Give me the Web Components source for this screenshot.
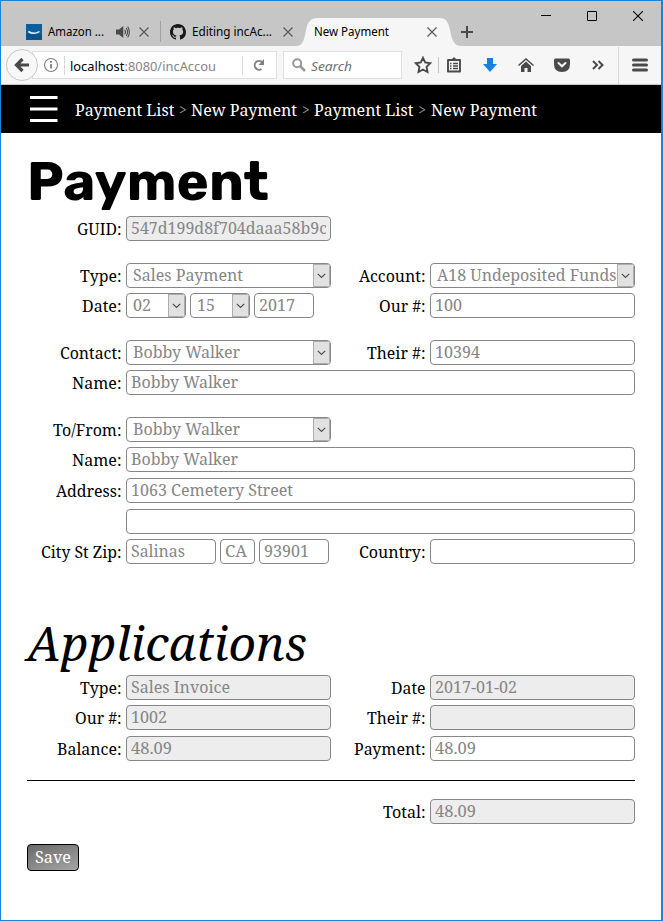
<!DOCTYPE html>
<html lang="en">
<head>
<meta charset="utf-8">
<title>New Payment</title>
<style>
html,body{margin:0;height:100%;background:#fff}
body{font:16px "Noto Serif","Droid Serif","DejaVu Serif Condensed","DejaVu Serif",serif;color:#000;overflow:hidden}
</style>
</head>
<body>
<app-window></app-window>
<script>
const define = (name, css, html, after) => customElements.define(name, class extends HTMLElement {
  connectedCallback() {
    if (this.shadowRoot) return;
    const root = this.attachShadow({mode: 'open'});
    root.innerHTML = `<style>*{box-sizing:border-box}${css}</style>` + (typeof html === 'function' ? html(this) : html);
    if (after) after(this, root);
  }
});

/* Single line of text condensed or widened to the width in "w". */
define('fit-text', `:host{display:block;flex:none;white-space:pre}span{display:inline-block;transform-origin:0 50%}`,
  '<span><slot></slot></span>', (host, root) => {
    const span = root.querySelector('span');
    const w = +host.getAttribute('w');
    if (!w) return;
    const natural = span.getBoundingClientRect().width;
    host.style.width = w + 'px';
    if (natural) span.style.transform = `scaleX(${w / natural})`;
  });

const X = '<path d="M3.5 3.5l9 9M12.5 3.5l-9 9" fill="none" stroke="#5a5a5a" stroke-width="1.2"/>';
const ICONS = {
  amazon: [16,16,'<path fill="#0b5f9e" d="M0 0h16v16H0z"/><path fill="#084a80" d="M0 10h16v6H0z" opacity=".6"/><path d="M2.3 7.5q5.700 3.700 11.200 0" fill="none" stroke="#e8f3fb" stroke-width="1.500"/>'],
  sound: [16,16,'<path fill="#4a4a4a" d="M1 5.5h3L8.300 2v12L4 10.500H1z"/><path d="M9.700 5.700q1.500 2.300 0 4.600M11.300 4q2.500 4 0 8M12.700 2.500q3.300 5.500 0 11" fill="none" stroke="#4a4a4a" stroke-width="1.100"/>'],
  close: [16,16,X],
  github: [16,16,'<path fill="#191717" fill-rule="evenodd" d="M8 0C3.580 0 0 3.580 0 8c0 3.540 2.290 6.530 5.470 7.590.4.070.550-.170.550-.380 0-.190-.010-.820-.010-1.490-2.010.370-2.530-.490-2.690-.940-.090-.230-.480-.940-.820-1.130-.280-.150-.680-.520-.010-.530.630-.010 1.080.580 1.230.820.720 1.210 1.870.870 2.330.660.070-.520.280-.870.510-1.070-1.780-.200-3.640-.890-3.640-3.950 0-.870.310-1.590.820-2.150-.080-.200-.360-1.020.080-2.120 0 0 .670-.210 2.200.820.640-.180 1.320-.270 2-.270s1.360.090 2 .270c1.530-1.040 2.200-.820 2.200-.820.440 1.100.160 1.920.080 2.120.510.560.820 1.270.820 2.150 0 3.070-1.870 3.750-3.650 3.950.290.250.540.730.540 1.480 0 1.070-.010 1.930-.010 2.200 0 .210.150.460.550.380A8.010 8.010 0 0 0 16 8c0-4.420-3.580-8-8-8z"/>'],
  plus: [12,12,'<path d="M6 0v12M0 6h12" stroke="#4a4a4a" stroke-width="2"/>'],
  min: [10,10,'<path d="M0 4.500h10" stroke="#000"/>'],
  max: [10,10,'<path d="M.5.5h9v9h-9z" fill="none" stroke="#000"/>'],
  quit: [10,10,'<path d="M0 0l10 10M10 0L0 10" stroke="#000" stroke-width="1.100"/>'],
  back: [16,16,'<path d="M15 8H3M8.500 2L2.500 8l6 6" fill="none" stroke="#4a4a4a" stroke-width="3.200"/>'],
  info: [16,16,'<circle cx="8" cy="8" r="6.500" fill="none" stroke="#808080" stroke-width="1.100"/><path d="M8 7v4.500M8 4v1.700" stroke="#707070" stroke-width="1.600"/>'],
  reload: [14,14,'<path d="M9.500 11A4.400 4.400 0 1 1 10.500 4.500" fill="none" stroke="#808080" stroke-width="1.900"/><path fill="#808080" d="M12 1v6H6.500z"/>'],
  search: [14,14,'<circle cx="5.200" cy="5.200" r="4" fill="none" stroke="#989898" stroke-width="2"/><path d="M8 8l5 5" stroke="#989898" stroke-width="2.500"/>'],
  star: [18,18,'<path d="M9 1.800l2.200 4.700 5 .7-3.600 3.600.9 5.200L9 13.500 4.500 16l.9-5.200-3.600-3.600 5-.7z" fill="none" stroke="#4a4a4a" stroke-width="1.900"/>'],
  list: [16,16,'<path d="M2 3h12v11.500H2z" fill="#f6f6f6" stroke="#4a4a4a" stroke-width="1.900" stroke-linejoin="round"/><path d="M4 4h8V2h-2L8 0 6 2H4z" fill="#4a4a4a"/><path d="M4 6.500h1.500M7 6.500h5M4 9h1.500M7 9h5M4 11.500h1.500M7 11.500h5" stroke="#4a4a4a" stroke-width="1.300"/>'],
  down: [16,16,'<path d="M5 1h6v6h4l-7 8-7-8h4z" fill="#177fe6"/>'],
  home: [18,16,'<path d="M1.500 8.500L9 2l7.500 6.500" fill="none" stroke="#4a4a4a" stroke-width="1.500"/><path d="M4 9l5-4.400L14 9v6h-3.500v-4h-3v4H4z" fill="#4a4a4a"/>'],
  pocket: [16,16,'<path d="M1.500 1.500h13q1.500 0 1.500 1.500v4q0 8-8 8t-8-8V3q0-1.500 1.500-1.500z" fill="#4a4a4a"/><path d="M4.500 6L8 9.300 11.500 6" fill="none" stroke="#f6f6f6" stroke-width="2" stroke-linecap="round"/>'],
  more: [12,12,'<path d="M1 2l4 4-4 4M6.500 2l4 4-4 4" fill="none" stroke="#4a4a4a" stroke-width="2"/>'],
  menu: [16,14,'<path d="M1.500 2h13M1.500 7h13M1.500 12h13" stroke="#4a4a4a" stroke-width="3" stroke-linecap="round"/>'],
  burger: [28,26,'<path d="M0 1.500h27.500M0 13h27.500M0 24.500h27.500" stroke="#fff" stroke-width="3"/>'],
  chevron: [9,6,'<path d="M.8.800l3.700 3.700L8.200.8" fill="none" stroke="#505050" stroke-width="1.200"/>']
};
define('ui-icon', ':host{display:block;flex:none}svg{display:block}', h => {
  const [w, ht, body] = ICONS[h.getAttribute('name')];
  return `<svg width="${w}" height="${ht}" viewBox="0 0 ${w} ${ht}">${body}</svg>`;
});

define('browser-tabs', `:host{display:flex;height:45px;background:#c6c6c6;font:12px/16px "Noto Sans","Open Sans",sans-serif}
.tab{display:flex;align-items:center;height:27px;margin-top:17px}
.a{width:159px;padding-left:25px}.a fit-text{margin-left:6px}
.sep{width:1px;height:21px;background:#a0a0a0;margin-top:20px}
.b{width:135px;padding-left:9px}.b fit-text{margin-left:6px}
.on{width:165px;height:28px;padding-left:18px}
.on{position:relative}.on svg{position:absolute;left:0;top:0}.on fit-text,.on ui-icon{position:relative}
.win{display:flex;align-items:flex-start;margin:10px 0 0 68px;gap:36px}`,
`<div class="tab a"><ui-icon name="amazon"></ui-icon><fit-text w="56">Amazon ...</fit-text><ui-icon name="sound" style="margin-left:11px"></ui-icon><ui-icon name="close" style="margin-left:5px"></ui-icon></div>
<div class="sep"></div>
<div class="tab b"><ui-icon name="github"></ui-icon><fit-text w="80">Editing incAc...</fit-text><ui-icon name="close" style="margin-left:8px"></ui-icon></div>
<div class="tab on"><svg width="165" height="28"><path fill="#f6f6f6" d="M0 28C7 28 8 22 10 12 12 3 15 0 22 0h121c7 0 9 3 11 12 2 10 4 16 11 16z"/></svg><fit-text w="75">New Payment</fit-text><ui-icon name="close" style="margin-left:35px"></ui-icon></div>
<ui-icon name="plus" style="margin-top:25px"></ui-icon>
<div class="win"><ui-icon name="min"></ui-icon><ui-icon name="max"></ui-icon><ui-icon name="quit"></ui-icon></div>`);

define('browser-toolbar', `:host{display:flex;height:39px;background:#f6f6f6;border-bottom:1px solid #c4c8c8;align-items:center;padding-left:5px;font:13px/18px "Noto Sans","Open Sans",sans-serif}
.back{width:32px;height:32px;border:1px solid #c8c8c8;border-radius:50%;background:#f8f8f8;display:grid;place-items:center;flex:none;z-index:1}
.url{margin-left:-6px;width:245px;height:28px;background:#fff;border:1px solid #e0e0e0;display:flex;align-items:center;padding-left:10px;flex:none}
.s{width:1px;height:19px;background:#d8d8d8;flex:none}
.url fit-text,.search fit-text{padding-top:1px}
.url fit-text{color:#858585}.url b{font-weight:400;color:#000}
.search{margin-left:6px;width:119px;height:28px;background:#fff;border:1px solid #e0e0e0;display:flex;align-items:center;padding-left:8px;gap:5px;color:#707070;font-style:italic;flex:none}
.tools{display:flex;align-items:center;margin-left:12px}
.tools>span{width:36px;display:grid;place-items:center}`,
`<div class="back"><ui-icon name="back"></ui-icon></div>
<div class="url"><ui-icon name="info"></ui-icon><i class="s" style="margin:0 5px"></i><fit-text w="146"><b>localhost</b>:8080/incAccou</fit-text><i class="s" style="margin:0 9px 0 26px"></i><ui-icon name="reload"></ui-icon></div>
<div class="search"><ui-icon name="search"></ui-icon><fit-text w="41">Search</fit-text></div>
<div class="tools"><ui-icon name="star"></ui-icon><i class="s" style="margin:0 -3px 0 6px;height:16px;background:#c4c4c4"></i><span><ui-icon name="list"></ui-icon></span><span><ui-icon name="down"></ui-icon></span><span><ui-icon name="home"></ui-icon></span><span><ui-icon name="pocket"></ui-icon></span><span><ui-icon name="more"></ui-icon></span><i class="s" style="height:37px;margin:0 13px 0 2px"></i><ui-icon name="menu"></ui-icon></div>`);

define('crumb-bar', `:host{display:flex;height:48px;background:#000;color:#fff;align-items:center;padding-left:29px;line-height:24px}
fit-text,i{padding-top:2px}
ui-icon{margin-right:17px}i{font-style:normal;color:#999;width:17px;text-align:center;font-size:14px;flex:none}`,
`<ui-icon name="burger"></ui-icon><fit-text w="99.300">Payment List</fit-text><i>&gt;</i><fit-text w="106">New Payment</fit-text><i>&gt;</i><fit-text w="99.300">Payment List</fit-text><i>&gt;</i><fit-text w="106">New Payment</fit-text>`);

define('form-row', `:host{display:grid;grid-template-columns:95px 205px 91px 205px;column-gap:4px;height:25px}
::slotted([wide]){grid-column:2 / span 3}::slotted([right]){grid-column-start:3}`, '<slot></slot>');
define('form-label', ':host{display:flex;justify-content:flex-end;line-height:25px;padding:1px 1px 0 0}',
  h => `<fit-text w="${h.getAttribute('w') - 0.5}">${h.getAttribute('text')}</fit-text>`);
define('field-group', ':host{display:flex;gap:4px}', '<slot></slot>');
define('text-field', `:host{display:block;height:25px;border:1px solid #868686;border-radius:4px;background:#fff;color:#868686;line-height:23px;padding:0 4px;box-sizing:border-box;overflow:hidden}
:host([off]){background:#ededed}div{overflow:hidden;height:23px}`,
  h => h.hasAttribute('v') ? `<div><fit-text w="${h.getAttribute('w')}">${h.getAttribute('v')}</fit-text></div>` : '');
define('select-field', `:host{display:flex;height:25px;border:1px solid #868686;border-radius:4px;background:#fff;color:#868686;line-height:23px;box-sizing:border-box;overflow:hidden}
div{flex:1;min-width:0;overflow:hidden;padding-left:6px}
i{width:17px;background:#e1e1e1;border:1px solid #adadad;display:grid;place-items:center;flex:none}`,
  h => `<div><fit-text w="${h.getAttribute('w')}">${h.getAttribute('v')}</fit-text></div><i><ui-icon name="chevron"></ui-icon></i>`);

define('payment-form', `:host{display:flex;flex-direction:column;padding:0 0 0 27px;margin-left:-1px;width:635px}
h1,h2{margin:0;font-weight:400}
h1{font:700 54px/64px Rubik,Inter,sans-serif;height:83px;padding:17px 0 0 0}
h2{font-size:48px;line-height:58px;font-style:italic;height:111px;padding-top:50px}
.g5{margin-top:5px}.g6{margin-top:6px}.g22{margin-top:22px}
hr{height:1px;border:0;background:#000;margin:19px 0 18px;width:608px}
button{margin:20px 0 0;width:52px;height:27px;border:1px solid #000;border-radius:4px;background:linear-gradient(160deg,#696969,#a5a5a5);color:#fff;font:inherit;line-height:23px;padding:0 0 1px 7px;text-align:left}`,
`<h1><fit-text w="242">Payment</fit-text></h1>
<form-row><form-label text="GUID:" w="45"></form-label><text-field off v="547d199d8f704daaa58b9c" w="196"></text-field></form-row>
<form-row class="g22"><form-label text="Type:" w="42"></form-label><select-field v="Sales Payment" w="110"></select-field><form-label text="Account:" w="67"></form-label><select-field v="A18 Undeposited Funds" w="179.500"></select-field></form-row>
<form-row class="g5"><form-label text="Date:" w="40"></form-label><field-group><select-field style="width:60px" v="02" w="18"></select-field><select-field style="width:60px" v="15" w="18"></select-field><text-field style="width:60px" v="2017" w="36"></text-field></field-group><form-label text="Our #:" w="47"></form-label><text-field v="100" w="27"></text-field></form-row>
<form-row class="g22"><form-label text="Contact:" w="62"></form-label><select-field v="Bobby Walker" w="107"></select-field><form-label text="Their #:" w="59"></form-label><text-field v="10394" w="45"></text-field></form-row>
<form-row class="g5"><form-label text="Name:" w="50"></form-label><text-field wide v="Bobby Walker" w="107"></text-field></form-row>
<form-row class="g22"><form-label text="To/From:" w="69"></form-label><select-field v="Bobby Walker" w="107"></select-field></form-row>
<form-row class="g5"><form-label text="Name:" w="50"></form-label><text-field wide v="Bobby Walker" w="107"></text-field></form-row>
<form-row class="g6"><form-label text="Address:" w="66"></form-label><text-field wide v="1063 Cemetery Street" w="162"></text-field></form-row>
<form-row class="g6"><text-field wide></text-field></form-row>
<form-row class="g5"><form-label text="City St Zip:" w="81"></form-label><field-group><text-field style="width:90px" v="Salinas" w="54"></text-field><text-field style="width:35px" v="CA" w="22"></text-field><text-field style="width:70px" v="93901" w="45"></text-field></field-group><form-label text="Country:" w="67"></form-label><text-field></text-field></form-row>
<h2><fit-text w="280">Applications</fit-text></h2>
<form-row><form-label text="Type:" w="42"></form-label><text-field off v="Sales Invoice" w="99"></text-field><form-label text="Date" w="35"></form-label><text-field off v="2017-01-02" w="82"></text-field></form-row>
<form-row class="g5"><form-label text="Our #:" w="47"></form-label><text-field off v="1002" w="36"></text-field><form-label text="Their #:" w="59"></form-label><text-field off></text-field></form-row>
<form-row class="g6"><form-label text="Balance:" w="65"></form-label><text-field off v="48.09" w="41"></text-field><form-label text="Payment:" w="72"></form-label><text-field v="48.09" w="41"></text-field></form-row>
<hr>
<form-row><form-label right text="Total:" w="43"></form-label><text-field off v="48.09" w="41"></text-field></form-row>
<button><fit-text w="36">Save</fit-text></button>`);

define('app-window', `:host{display:block;width:663px;height:921px;border:1px solid #1a82d8;border-right-width:2px;background:#fff;overflow:hidden;box-sizing:border-box}`,
`<browser-tabs></browser-tabs><browser-toolbar></browser-toolbar><crumb-bar></crumb-bar><payment-form></payment-form>`);
</script>
</body>
</html>
